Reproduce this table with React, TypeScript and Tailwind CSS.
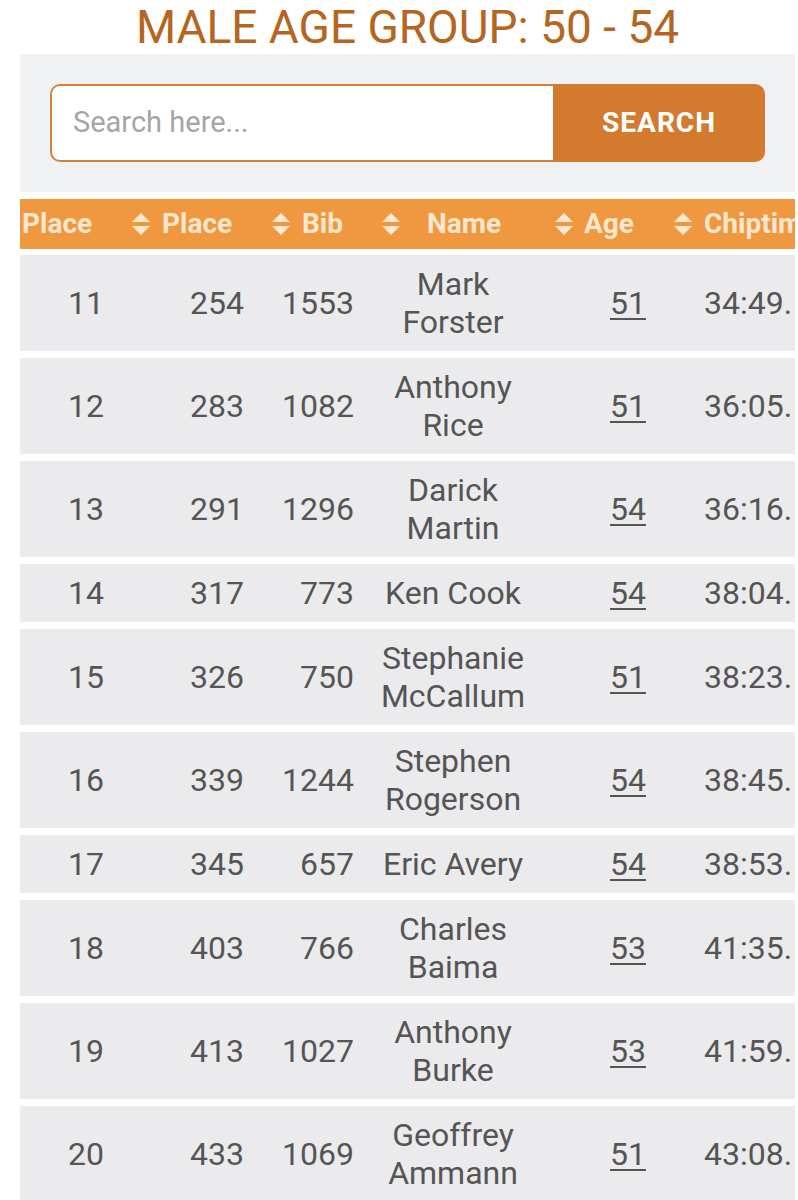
import React from "react";

const rows: { p: string; op: string; bib: string; name: string[]; age: string; time: string }[] = [
  { p: "11", op: "254", bib: "1553", name: ["Mark", "Forster"], age: "51", time: "34:49." },
  { p: "12", op: "283", bib: "1082", name: ["Anthony", "Rice"], age: "51", time: "36:05." },
  { p: "13", op: "291", bib: "1296", name: ["Darick", "Martin"], age: "54", time: "36:16." },
  { p: "14", op: "317", bib: "773", name: ["Ken Cook"], age: "54", time: "38:04." },
  { p: "15", op: "326", bib: "750", name: ["Stephanie", "McCallum"], age: "51", time: "38:23." },
  { p: "16", op: "339", bib: "1244", name: ["Stephen", "Rogerson"], age: "54", time: "38:45." },
  { p: "17", op: "345", bib: "657", name: ["Eric Avery"], age: "54", time: "38:53." },
  { p: "18", op: "403", bib: "766", name: ["Charles", "Baima"], age: "53", time: "41:35." },
  { p: "19", op: "413", bib: "1027", name: ["Anthony", "Burke"], age: "53", time: "41:59." },
  { p: "20", op: "433", bib: "1069", name: ["Geoffrey", "Ammann"], age: "51", time: "43:08." },
];

function SortIcon() {
  return (
    <svg width="18" height="22" viewBox="0 0 18 22" className="shrink-0">
      <polygon points="9,0 18,9 0,9" fill="#fde7cf" />
      <polygon points="0,13 18,13 9,22" fill="#fde7cf" />
    </svg>
  );
}

export default function App() {
  return (
    <div className="min-h-[1200px] bg-white font-[Roboto] overflow-hidden">
      <div className="ml-[20px] w-[775px] overflow-hidden">
        <h1 className="text-center text-[46px] leading-[54px] text-[#b5651d] font-normal">
          MALE AGE GROUP: 50 - 54
        </h1>
        <div className="bg-[#eff1f3] px-[30px] py-[30px]">
          <div className="flex h-[78px]">
            <div className="flex-1 flex items-center bg-white border-2 border-r-0 border-[#d3823c] rounded-l-[10px] pl-[21px]">
              <span className="text-[29px] text-[#a5a5a5]">Search here...</span>
            </div>
            <div className="w-[212px] flex items-center justify-center bg-[#d47a2e] rounded-r-[10px]">
              <span className="text-[28px] font-bold text-white tracking-[1px]">SEARCH</span>
            </div>
          </div>
        </div>
        <div className="mt-[7px] h-[50px] bg-[#f0983f] flex items-center text-[28px] font-bold text-[#fde7cf] whitespace-nowrap">
          <div className="w-[135px] shrink-0 flex items-center justify-between pl-[2px] pr-[5px]">
            <span>Place</span>
            <SortIcon />
          </div>
          <div className="w-[140px] shrink-0 flex items-center justify-between pl-[7px] pr-[5px]">
            <span>Place</span>
            <SortIcon />
          </div>
          <div className="w-[110px] shrink-0 flex items-center justify-between pl-[7px] pr-[5px]">
            <span>Bib</span>
            <SortIcon />
          </div>
          <div className="w-[173px] shrink-0 flex items-center justify-between pl-[22px] pr-[5px]">
            <span>Name</span>
            <SortIcon />
          </div>
          <div className="w-[120px] shrink-0 flex items-center justify-between pl-[6px] pr-[6px]">
            <span>Age</span>
            <SortIcon />
          </div>
          <div className="shrink-0 pl-[6px]">
            <span>Chiptime</span>
          </div>
        </div>
        <div className="mt-[6px] flex flex-col gap-[7px]">
          {rows.map((r) => (
            <div
              key={r.p}
              className="flex items-center bg-[#ebebed] py-[10px] text-[32px] leading-[38px] text-[#555555] whitespace-nowrap"
            >
              <div className="w-[135px] shrink-0 pl-[48px]">{r.p}</div>
              <div className="w-[89px] shrink-0 text-right">{r.op}</div>
              <div className="w-[110px] shrink-0 text-right">{r.bib}</div>
              <div className="w-[198px] shrink-0 text-center flex flex-col">
                {r.name.map((n) => (
                  <span key={n}>{n}</span>
                ))}
              </div>
              <div className="w-[152px] shrink-0 text-center">
                <span className="underline underline-offset-[4px] decoration-[2px]">{r.age}</span>
              </div>
              <div className="shrink-0">{r.time}</div>
            </div>
          ))}
        </div>
      </div>
    </div>
  );
}
